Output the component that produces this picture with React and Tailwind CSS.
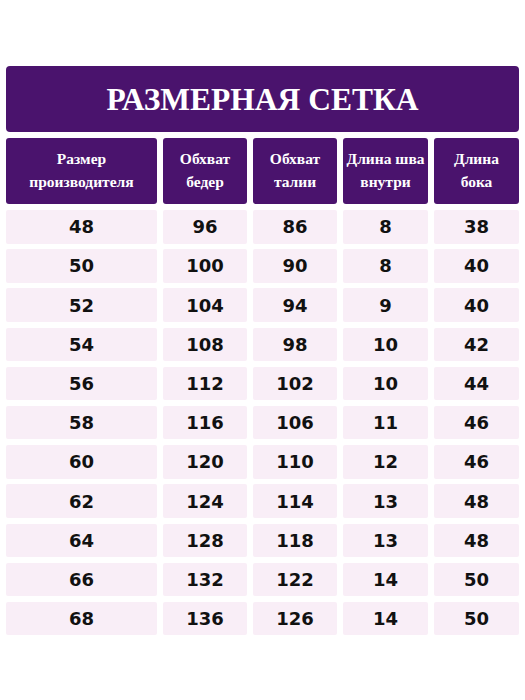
import React from "react";

const rows = [
  ["48", "96", "86", "8", "38"],
  ["50", "100", "90", "8", "40"],
  ["52", "104", "94", "9", "40"],
  ["54", "108", "98", "10", "42"],
  ["56", "112", "102", "10", "44"],
  ["58", "116", "106", "11", "46"],
  ["60", "120", "110", "12", "46"],
  ["62", "124", "114", "13", "48"],
  ["64", "128", "118", "13", "48"],
  ["66", "132", "122", "14", "50"],
  ["68", "136", "126", "14", "50"],
];

const headers = [
  ["Размер", "производителя"],
  ["Обхват", "бедер"],
  ["Обхват", "талии"],
  ["Длина шва", "внутри"],
  ["Длина", "бока"],
];

const serif = { fontFamily: '"Liberation Serif", "DejaVu Serif", serif' };

export default function App() {
  return (
    <div className="w-[525px] h-[700px] bg-white pt-[66px] pl-[6px]">
      <div className="w-[513px]">
        <div
          className="h-[66px] rounded-[4px] bg-[#4a136d] flex items-center justify-center text-white font-bold text-[31.5px] pt-[1px]"
          style={serif}
        >
          РАЗМЕРНАЯ СЕТКА
        </div>
        <div className="mt-[6px] grid grid-cols-[151px_84px_84px_85px_85px] gap-x-[6px]">
          {headers.map((h, i) => (
            <div
              key={i}
              className="h-[66px] rounded-[3px] bg-[#4a136d] text-white font-bold text-[15.5px] leading-[23px] flex flex-col items-center justify-center pb-[2px]"
              style={serif}
            >
              <span>{h[0]}</span>
              <span>{h[1]}</span>
            </div>
          ))}
        </div>
        <div
          className="mt-[6px] grid grid-cols-[151px_84px_84px_85px_85px] gap-x-[6px] gap-y-[5.7px] auto-rows-[33.5px]"
          style={{ fontFamily: '"DejaVu Sans", Verdana, sans-serif' }}
        >
          {rows.map((r, ri) =>
            r.map((v, ci) => (
              <div
                key={ri + "-" + ci}
                className="rounded-[2px] bg-[#f9eef7] flex items-center justify-center font-bold text-[18px] text-[#111]"
              >
                {v}
              </div>
            ))
          )}
        </div>
      </div>
    </div>
  );
}
